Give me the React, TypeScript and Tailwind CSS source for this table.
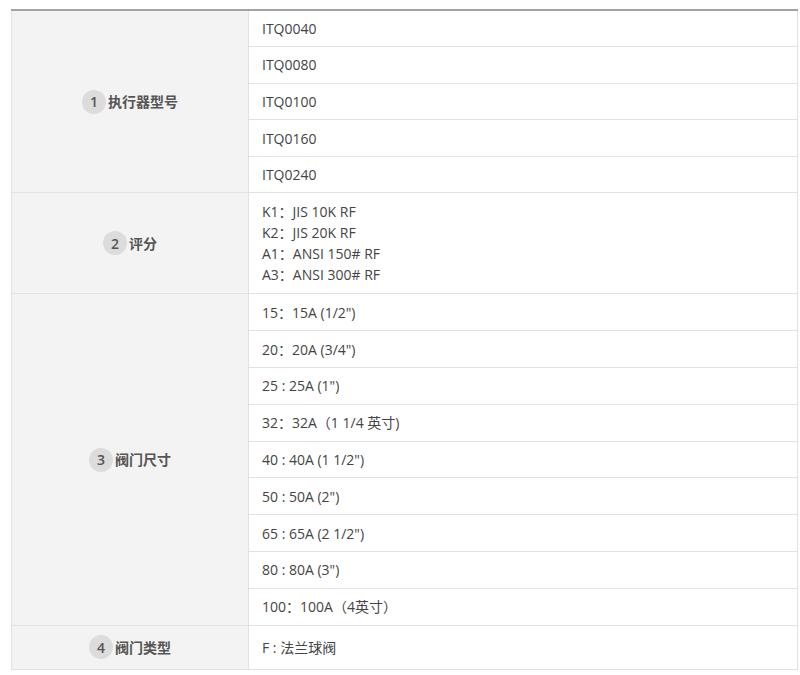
import React from "react";

type Group = { no: number; label: string; rows: string[]; stacked?: boolean; rowH: string };

const groups: Group[] = [
  {
    no: 1,
    label: "执行器型号",
    rows: ["ITQ0040", "ITQ0080", "ITQ0100", "ITQ0160", "ITQ0240"],
    rowH: "h-[36.6px]",
  },
  {
    no: 2,
    label: "评分",
    rows: ["K1：JIS 10K RF", "K2：JIS 20K RF", "A1：ANSI 150# RF", "A3：ANSI 300# RF"],
    stacked: true,
    rowH: "h-[101px]",
  },
  {
    no: 3,
    label: "阀门尺寸",
    rows: [
      "15：15A (1/2\")",
      "20：20A (3/4\")",
      "25 : 25A (1\")",
      "32：32A（1 1/4 英寸)",
      "40 : 40A (1 1/2\")",
      "50 : 50A (2\")",
      "65 : 65A (2 1/2\")",
      "80 : 80A (3\")",
      "100：100A（4英寸）",
    ],
    rowH: "h-[36.8px]",
  },
  { no: 4, label: "阀门类型", rows: ["F : 法兰球阀"], rowH: "h-[44px]" },
];

const Label = ({ no, label }: { no: number; label: string }) => (
  <div className="flex items-center justify-center gap-[2px]">
    <span className="flex h-[24px] w-[24px] items-center justify-center rounded-full bg-[#dcdcdc] text-[14px] font-semibold text-[#555]">
      {no}
    </span>
    <span className="text-[14px] font-semibold text-[#555]">{label}</span>
  </div>
);

const App = () => {
  return (
    <div
      className="h-[675px] w-[800px] bg-white pt-[9px] pl-[11px]"
      style={{ fontFamily: '"Open Sans", "Noto Sans CJK SC", sans-serif' }}
    >
      <table className="w-[787px] table-fixed border-collapse border-t-2 border-t-[#a3a3a3] text-[14px] text-[#444]">
        <colgroup>
          <col className="w-[237px]" />
          <col />
        </colgroup>
        <tbody>
          {groups.map((g) =>
            g.stacked ? (
              <tr key={g.no} className={g.rowH}>
                <td className="border border-[#e2e2e2] bg-[#f3f3f3] align-middle">
                  <Label no={g.no} label={g.label} />
                </td>
                <td className="border border-[#e2e2e2] px-[13px] align-middle leading-[21px]">
                  {g.rows.map((r) => (
                    <div key={r}>{r}</div>
                  ))}
                </td>
              </tr>
            ) : (
              g.rows.map((r, i) => (
                <tr key={g.no + r} className={g.rowH}>
                  {i === 0 ? (
                    <td rowSpan={g.rows.length} className="border border-[#e2e2e2] bg-[#f3f3f3] align-middle">
                      <Label no={g.no} label={g.label} />
                    </td>
                  ) : null}
                  <td className="border border-[#e2e2e2] px-[13px] align-middle">{r}</td>
                </tr>
              ))
            )
          )}
        </tbody>
      </table>
    </div>
  );
};

export default App;
